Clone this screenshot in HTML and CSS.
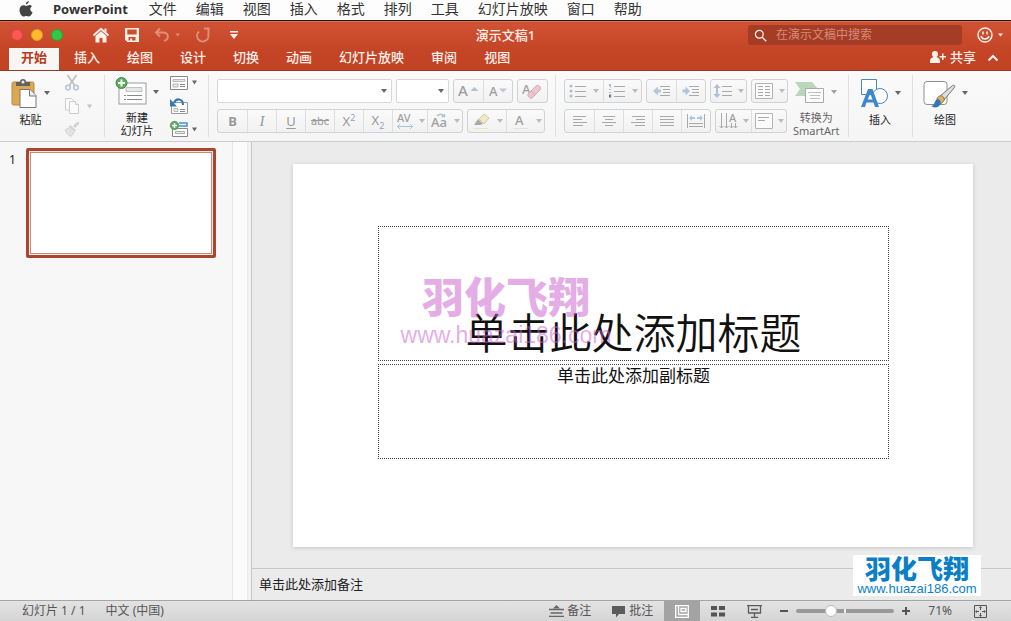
FILE: index.html
```html
<!DOCTYPE html>
<html lang="zh-CN">
<head>
<meta charset="utf-8">
<title>演示文稿1 - PowerPoint</title>
<link rel="stylesheet" href="styles.css">
</head>
<body>
<nav class="menubar" aria-label="应用菜单">
  <button class="menu" aria-label="Apple"><svg class="apple" width="16" height="16" viewBox="0 0 16 16"><path fill="currentColor" d="M10.8 0c.1 1.700-1.200 3.300-2.900 3.400C7.700 1.800 9.200.2 10.800 0zM13.900 5.400c-1.100.7-1.700 1.600-1.600 2.900.1 1.500.9 2.400 2.200 3-.6 1.700-1.900 4.200-3.500 4.300-.9 0-1.400-.6-2.600-.6s-1.700.6-2.600.6C3.600 15.600 1.500 11.800 1.500 8.900c0-3 1.900-4.700 3.900-4.700 1.200 0 2 .7 2.900.7.800 0 1.800-.8 3.200-.8 1 0 1.900.5 2.400 1.300z"/></svg></button>
  <button class="menu menu-app">PowerPoint</button>
  <button class="menu">文件</button>
  <button class="menu">编辑</button>
  <button class="menu">视图</button>
  <button class="menu">插入</button>
  <button class="menu">格式</button>
  <button class="menu">排列</button>
  <button class="menu">工具</button>
  <button class="menu">幻灯片放映</button>
  <button class="menu">窗口</button>
  <button class="menu">帮助</button>
</nav>

<header class="titlebar">
  <div class="title-row">
    <div class="title-left">
      <div class="lights">
        <button class="light light-close" aria-label="关闭"></button>
        <button class="light light-min" aria-label="最小化"></button>
        <button class="light light-max" aria-label="缩放"></button>
      </div>
      <div class="quick">
        <button aria-label="主页"><svg width="18" height="16" viewBox="0 0 18 16"><path fill="none" stroke="currentColor" stroke-width="2" d="M1.500 8.500 9 1.800l7.500 6.700"/><path fill="currentColor" d="M12.500 1.500h2v4l-2-1.800zM3.500 9 9 4.300 14.500 9v6.500h-4v-4.500h-3v4.500h-4z"/></svg></button>
        <button aria-label="保存"><svg width="14" height="14" viewBox="1 1 14 14"><path fill="currentColor" fill-rule="evenodd" d="M1 1h14v14H3.500L1 12.700zM3.300 2.500v5h9.400v-5zM4.500 10v3.500h1.700v-2h2v2h3.300V10z"/></svg></button>
        <button class="dim" aria-label="撤消"><svg width="26" height="16" viewBox="0 0 26 16"><path fill="none" stroke="currentColor" stroke-width="2" d="M6 1.500 2 5.500l4 4M2.500 5.500H9c6 0 6.500 7 1 8.500"/><path fill="currentColor" d="M21.500 6.500h4.500l-2.200 3z"/></svg></button>
        <button class="dim" aria-label="恢复"><svg width="16" height="16" viewBox="0 0 16 16"><path fill="none" stroke="currentColor" stroke-width="2" d="M9 1.500h5.500M13.500 1v6M4 4.500a5.700 5.700 0 1 0 9 2"/></svg></button>
        <button class="customize" aria-label="自定义工具栏"><svg width="8" height="10" viewBox="0 0 8 10"><path fill="currentColor" d="M0 1h8v1.500H0zM0 4h8L4 9z"/></svg></button>
      </div>
    </div>
    <h1 class="doc-title">演示文稿1</h1>
    <div class="title-right">
      <label class="search">
        <svg width="13" height="13" viewBox="0 0 13 13"><g fill="none" stroke="currentColor" stroke-width="1.300"><circle cx="5.300" cy="5.300" r="3.900"/><path d="m8.200 8.200 4 4"/></g></svg>
        <input type="search" placeholder="在演示文稿中搜索" aria-label="在演示文稿中搜索">
      </label>
      <button class="smile" aria-label="反馈"><svg width="26" height="16" viewBox="0 0 26 16"><circle cx="8" cy="8" r="7" fill="none" stroke="currentColor" stroke-width="1.400"/><path fill="none" stroke="currentColor" stroke-width="1.500" d="M6 4.500v3M10 4.500v3M4 9c1 4 7 4 8 0"/><path fill="currentColor" d="M21 6.500h5l-2.500 3z"/></svg></button>
    </div>
  </div>
  <div class="tab-row">
    <nav class="tabs" aria-label="功能区">
      <button class="tab tab-active">开始</button>
      <button class="tab">插入</button>
      <button class="tab">绘图</button>
      <button class="tab">设计</button>
      <button class="tab">切换</button>
      <button class="tab">动画</button>
      <button class="tab">幻灯片放映</button>
      <button class="tab">审阅</button>
      <button class="tab">视图</button>
    </nav>
    <button class="share"><svg width="18" height="14" viewBox="0 0 18 14"><path fill="currentColor" d="M6 1a3 3 0 0 1 3 3c0 1.500-.6 2.500-1.300 3.200 2 .6 3.300 1.800 3.300 3.800v2H1v-2c0-2 1.300-3.200 3.300-3.800C3.600 6.500 3 5.500 3 4a3 3 0 0 1 3-3zM13 3.500h1.500V6H17v1.500h-2.500V10H13V7.500h-2.500V6H13z"/></svg>共享</button>
    <button class="collapse" aria-label="折叠功能区"><svg width="12" height="8" viewBox="0 0 12 8"><path fill="none" stroke="currentColor" stroke-width="2" d="m1.500 6.500 4.500-4.500 4.500 4.500"/></svg></button>
  </div>
</header>

<section class="ribbon" aria-label="开始">
  <div class="group group-clip">
    <button class="big">
      <span class="big-icon"><svg width="27" height="30" viewBox="0 0 27 30"><rect x="1" y="4" width="22" height="23" rx="1.500" fill="#dba851" stroke="#b78a43"/><path fill="#66615c" d="M5 8V4h4a3 3 0 0 1 6 0h4v4z"/><circle cx="12" cy="4" r="1.500" fill="#eee"/><path fill="#fff" stroke="#777" d="M9 11.500h10l6 6v12H9z"/><path fill="#eee" stroke="#777" d="M18.500 11.500v6.500H25"/></svg><i class="caret"></i></span>
      <span>粘贴</span>
    </button>
    <div class="stack faded">
      <button aria-label="剪切"><svg width="28" height="16" viewBox="0 0 28 16"><path fill="none" stroke="#777" stroke-width="1.600" d="M3.500 0 11 11M12.500 0 5 11"/><g fill="none" stroke="#5d87b5" stroke-width="1.500"><circle cx="4" cy="12.500" r="2.300"/><circle cx="12" cy="12.500" r="2.300"/></g></svg></button>
      <button aria-label="复制"><svg width="28" height="16" viewBox="0 0 28 16"><g fill="#fff" stroke="#999"><path d="M1.500.5h6l3 3V12h-9z"/><path d="M5.500 3.500h6l3 3v9h-9z"/><path d="M11.500 3.500v3h3"/></g><path fill="#888" d="M23 6.500h5l-2.500 4z"/></svg></button>
      <button aria-label="格式刷"><svg width="28" height="16" viewBox="0 0 28 16"><path fill="#aaa" d="m9 5 4-4c1-1 3 1 2 2l-4 4zM6 4l6 5-1.500 2L4.500 6z"/><path fill="#c9cdd0" stroke="#999" stroke-width=".7" d="m4 7 6 5-3 3.500C4 14 2 12 1 9z"/></svg></button>
    </div>
  </div>

  <div class="group group-slides">
    <button class="big">
      <span class="big-icon"><svg width="32" height="30" viewBox="0 0 32 30"><rect x="4" y="6" width="27" height="21" fill="#fff" stroke="#999"/><path fill="#e5e8ea" stroke="#aaa" stroke-width=".7" d="M11 10.500h16v4H11z"/><path stroke="#888" d="M9 18.500h2m1 0h15M9 22.500h2m1 0h15"/><circle cx="6.500" cy="6" r="5.500" fill="#5bab5c" stroke="#418c43"/><path stroke="#fff" stroke-width="2" d="M6.500 2.500v7M3 6h7"/></svg><i class="caret"></i></span>
      <span>新建<br>幻灯片</span>
    </button>
    <div class="stack">
      <button aria-label="版式"><svg width="27" height="16" viewBox="0 0 27 16"><path fill="#fff" stroke="#888" d="M.5 1.500h17v13H.5z"/><path fill="#e9e9e9" stroke="#aaa" stroke-width=".8" d="M3 4.500h12v2H3zM3 9h5v3H3z"/><path stroke="#888" d="M10 9.500h5m-5 2h5"/><path fill="#666" d="M22 5.500h5l-2.500 4z"/></svg></button>
      <button aria-label="重置"><svg width="27" height="16" viewBox="0 0 27 16"><path fill="#fff" stroke="#999" d="M1.500 4.500h16v11h-16z"/><path fill="#e9e9e9" stroke="#aaa" stroke-width=".8" d="M4 10.500h4v3H4z"/><path stroke="#888" d="M10 11.500h5m-5 2h5"/><path fill="none" stroke="#3878b5" stroke-width="2.200" d="M4 5c2-5 9-5 9 2"/><path fill="#3878b5" d="M0 1v7.500h7z"/></svg></button>
      <button aria-label="节"><svg width="27" height="16" viewBox="0 0 27 16"><path fill="none" stroke="#4b8dce" stroke-width="1.500" d="M9 2h8v3H9"/><path fill="#fff" stroke="#888" d="M2.500 7.500h15v8h-15z"/><path fill="#eee" stroke="#aaa" d="M5.500 10.500h9v2h-9z"/><circle cx="4.500" cy="4.500" r="4.200" fill="#5bab5c" stroke="#418c43" stroke-width=".6"/><path stroke="#fff" stroke-width="1.600" d="M4.500 2v5M2 4.500h5"/><path fill="#666" d="M22 6.500h5l-2.500 4z"/></svg></button>
    </div>
  </div>

  <div class="group group-font">
    <div class="line">
      <label class="combo combo-font"><input type="text" aria-label="字体"><i class="caret"></i></label>
      <label class="combo combo-size"><input type="text" aria-label="字号"><i class="caret"></i></label>
      <div class="strip">
        <button class="cell" aria-label="增大字号"><svg width="22" height="18" viewBox="0 0 22 18"><text x="0" y="14" class="glyph glyph-l">A</text><path fill="#7da3c4" d="M12.500 9h8l-4-4z"/></svg></button>
        <button class="cell" aria-label="减小字号"><svg width="22" height="18" viewBox="0 0 22 18"><text x="2" y="14" class="glyph glyph-m">A</text><path fill="#9aabbb" d="M12 6.500h8l-4 4z"/></svg></button>
      </div>
      <div class="strip"><button class="cell" aria-label="清除格式"><svg width="24" height="20" viewBox="0 0 24 20"><text x="1" y="13" class="glyph glyph-m">A</text><path fill="#e9a9b4" stroke="#b77c88" d="m7 13 8-8c2-2 6 1 4 4l-8 8c-2 1-5-2-4-4z"/><path stroke="#b77c88" d="m10 10 4.500 4"/></svg></button></div>
    </div>
    <div class="line">
      <div class="strip">
        <button class="cell f-b">B</button>
        <button class="cell f-i">I</button>
        <button class="cell f-u">U</button>
        <button class="cell f-s">abc</button>
        <button class="cell f-x"><span>X<sup>2</sup></span></button>
        <button class="cell f-x"><span>X<sub>2</sub></span></button>
        <button class="cell cell-menu" aria-label="字符间距"><svg width="18" height="18" viewBox="0 0 18 18"><text x="1" y="10" class="glyph glyph-s">AV</text><path fill="none" stroke="#7da3c4" d="M1 14.500h16M4 12l-2.500 2.500L4 17m10-5 2.500 2.500L14 17"/></svg><i class="caret"></i></button>
        <button class="cell cell-menu" aria-label="更改大小写"><svg width="18" height="18" viewBox="0 0 18 18"><text x="0" y="15" class="glyph glyph-m">Aa</text><path fill="none" stroke="#7da3c4" stroke-width="1.500" d="M6 4c3-3 6-2 7 1m-2.500-.5h3V2"/></svg><i class="caret"></i></button>
      </div>
      <div class="strip">
        <button class="cell cell-split" aria-label="突出显示"><svg width="20" height="18" viewBox="0 0 20 18"><path fill="#eee0a4" stroke="#c0ac6b" d="m8 7 5-5 5 4-5 6z"/><path fill="#777" d="m7 7 5 5-3 1H3z"/><path stroke="#e6dc9c" d="M2 16.500h15"/></svg><i class="caret"></i></button>
        <button class="cell cell-split" aria-label="字体颜色"><svg width="20" height="18" viewBox="0 0 20 18"><text x="5" y="13" class="glyph glyph-m">A</text><path stroke="#e4d2d2" d="M3 16.500h15"/></svg><i class="caret"></i></button>
      </div>
    </div>
  </div>

  <div class="group group-para">
    <div class="para">
      <div class="line">
        <div class="strip">
          <button class="cell cell-split" aria-label="项目符号"><svg width="18" height="16" viewBox="0 0 18 16"><g fill="#7d96b4"><circle cx="2" cy="3" r="1.500"/><circle cx="2" cy="8" r="1.500"/><circle cx="2" cy="13" r="1.500"/></g><path stroke="#777" d="M6 3.500h11M6 8.500h11M6 13.500h11"/></svg><i class="caret"></i></button>
          <button class="cell cell-split" aria-label="编号"><svg width="18" height="16" viewBox="0 0 18 16"><path stroke="#7d96b4" d="M1 1.500h1.500v3m-1.500 2h2m-2 3h2m-2 2h2v3H1"/><path stroke="#777" d="M6 3.500h11M6 8.500h11M6 13.500h11"/></svg><i class="caret"></i></button>
        </div>
        <div class="strip">
          <button class="cell" aria-label="减少缩进"><svg width="20" height="14" viewBox="0 0 20 14"><path fill="#87a8cf" d="m1 7 5-4.500v3h3v3H6v3z"/><path stroke="#777" d="M8 2.500h10m-7 3h7m-7 3h7m-10 3h10"/></svg></button>
          <button class="cell" aria-label="增加缩进"><svg width="20" height="14" viewBox="0 0 20 14"><path fill="#78a7cf" d="M9 7 4.500 2.500v3h-3v3h3v3z"/><path stroke="#777" d="M8 2.500h10m-7 3h7m-7 3h7m-10 3h10"/></svg></button>
        </div>
        <div class="strip"><button class="cell cell-menu" aria-label="行距"><svg width="20" height="16" viewBox="0 0 20 16"><path fill="#839bc4" d="m4 1 3.500 4H5v6h2.500L4 15 .5 11H3V5H.5z"/><path stroke="#777" d="M9 3.500h10M9 8.500h10M9 12.500h10"/></svg><i class="caret"></i></button></div>
        <div class="strip"><button class="cell cell-menu" aria-label="分栏"><svg width="20" height="16" viewBox="0 0 20 16"><path fill="#fff" stroke="#888" d="M1.500.5h17v15h-17z"/><path stroke="#777" d="M4 3.500h5m2 0h5m-12 3h5m2 0h5m-12 3h5m2 0h5m-12 3h5m2 0h5"/></svg><i class="caret"></i></button></div>
      </div>
      <div class="line">
        <div class="strip">
          <button class="cell" aria-label="左对齐"><svg width="16" height="14" viewBox="0 0 16 14"><path stroke="#777" d="M1 2.500h13m-13 3h9m-9 3h14m-14 3h10"/></svg></button>
          <button class="cell" aria-label="居中"><svg width="16" height="14" viewBox="0 0 16 14"><path stroke="#777" d="M2 2.500h12m-10 3h8m-11 3h14m-11 3h8"/></svg></button>
          <button class="cell" aria-label="右对齐"><svg width="16" height="14" viewBox="0 0 16 14"><path stroke="#777" d="M2 2.500h13m-9 3h9m-14 3h14m-10 3h10"/></svg></button>
          <button class="cell" aria-label="两端对齐"><svg width="16" height="14" viewBox="0 0 16 14"><path stroke="#777" d="M1 2.500h14m-14 3h14m-14 3h14m-14 3h14"/></svg></button>
          <button class="cell" aria-label="分散对齐"><svg width="20" height="16" viewBox="0 0 20 16"><path stroke="#777" d="M1.500 1v14m17-14v14M3 10.500h14m-14 3h14"/><path fill="#76a9c7" d="m3 5 3-3v2h3v2H6v2zm14 0-3-3v2h-3v2h3v2z"/></svg></button>
        </div>
        <div class="strip">
          <button class="cell cell-menu" aria-label="文字方向"><svg width="20" height="18" viewBox="0 0 20 18"><path fill="none" stroke="#777" d="M3.500 1v15M8.500 1v15M13.500 11v5m4-5v5M1.500 14l2 2 2-2m1 0 2 2 2-2m1 0 2 2 2-2m0 0 2 2 2-2"/><text x="11" y="10" class="glyph glyph-s">A</text></svg><i class="caret"></i></button>
          <button class="cell cell-menu" aria-label="对齐文本"><svg width="18" height="16" viewBox="0 0 18 16"><path fill="#fff" stroke="#888" d="M.5.5h17v15H.5z"/><path stroke="#777" d="M3 4.500h11M3 7.500h7"/></svg><i class="caret"></i></button>
        </div>
      </div>
    </div>
    <button class="big big-off">
      <span class="big-icon"><svg width="30" height="30" viewBox="0 0 30 30"><path fill="#8fc292" d="M0 5h17l6 7-6 7H0l5-7z"/><path fill="#fff" stroke="#777" d="M10.500 11.500h18v14h-18z"/><path stroke="#999" d="M13 15.500h13M15 18.500h10M15 21.500h10"/></svg><i class="caret"></i></span>
      <span>转换为<br>SmartArt</span>
    </button>
  </div>

  <div class="group group-insert">
    <button class="big">
      <span class="big-icon"><svg width="29" height="30" viewBox="0 0 29 30"><path fill="#fff" stroke="#4b89bd" d="M1.500 1.500h15v15h-15z"/><circle cx="20" cy="18" r="7.500" fill="#fff" stroke="#4b89bd"/><path fill="#3d87cc" fill-rule="evenodd" d="M8 11h4.500L19 29h-4l-1.500-4.500h-7L5 29H1zm2.200 4.500L7.700 21.500h4.900z"/></svg><i class="caret"></i></span>
      <span>插入</span>
    </button>
  </div>
  <div class="group group-draw">
    <button class="big">
      <span class="big-icon"><svg width="33" height="30" viewBox="0 0 33 30"><rect x="1" y="3.500" width="23" height="23" rx="3" fill="#fff" stroke="#8f8f8f"/><path fill="#ddd" stroke="#777" d="m17 18 12-10c2-2 4 0 2 2L21 22z"/><path fill="#deb16b" stroke="#9a7546" d="M14 21c1-4 6-4 7-1s-2 6-5 6z"/><path fill="#3475b5" d="M8 28c4 0 3-5 6-7 3 0 5 3 3 6-2 3-6 3-9 1z"/></svg><i class="caret"></i></span>
      <span>绘图</span>
    </button>
  </div>
</section>

<main class="workspace">
  <aside class="thumbs" aria-label="幻灯片缩略图">
    <span class="thumb-no">1</span>
    <button class="thumb" aria-label="幻灯片 1"></button>
  </aside>
  <div class="scroller"></div>
  <section class="editor">
    <div class="stage">
      <article class="slide">
        <h2 class="holder holder-title">单击此处添加标题</h2>
        <p class="holder holder-sub">单击此处添加副标题</p>
        <div class="mark mark-slide"><strong>羽化飞翔</strong><span>www.huazai186.com</span></div>
      </article>
    </div>
    <input class="notes" type="text" placeholder="单击此处添加备注" aria-label="备注">
    <div class="mark mark-corner"><strong>羽化飞翔</strong><span>www.huazai186.com</span></div>
  </section>
</main>

<footer class="status">
  <span>幻灯片 1 / 1</span>
  <button class="lang">中文 (中国)</button>
  <div class="status-right">
    <button class="status-btn"><svg width="15" height="12" viewBox="0 0 15 12"><path fill="#666" d="m7.500 0 3.500 3.500H4z"/><path stroke="#666" stroke-width="1.300" d="M0 4.500h15M1.500 8h12M0 11.300h15"/></svg>备注</button>
    <button class="status-btn"><svg width="15" height="13" viewBox="0 0 15 13"><path fill="#5c5c5c" d="M1 1h13v8H8l-3 3.500V9H1z"/></svg>批注</button>
    <div class="views">
      <button class="view view-on" aria-label="普通视图"><svg width="14" height="13" viewBox="0 0 14 13"><path fill="none" stroke="#fff" stroke-width="1.300" d="M.7.7h12.600v11.600H.7zM3.500 1v8.500M3.500 9.500H13M6 3.500h5v3H6z"/></svg></button>
      <button class="view" aria-label="幻灯片浏览"><svg width="16" height="12" viewBox="0 0 16 12"><path fill="#555" d="M1 1h6v4H1zM9 1h6v4H9zM1 7.500h6v4H1zM9 7.500h6v4H9z"/></svg></button>
      <button class="view" aria-label="幻灯片放映"><svg width="15" height="13" viewBox="0 0 15 13"><path fill="none" stroke="#5c5c5c" stroke-width="1.300" d="M0 .7h15M1.500 1v7h12V1M4 4.500h7M7.500 8v4M4 12.300h7"/></svg></button>
    </div>
    <div class="zoom">
      <button aria-label="缩小"><svg width="8" height="8" viewBox="0 0 8 8"><path stroke="#555" stroke-width="2" d="M0 4h8"/></svg></button>
      <input type="range" min="0" max="100" value="33" aria-label="缩放比例">
      <button aria-label="放大"><svg width="8" height="8" viewBox="0 0 8 8"><path stroke="#555" stroke-width="2" d="M0 4h8M4 0v8"/></svg></button>
    </div>
    <span class="percent">71%</span>
    <button aria-label="适应窗口"><svg width="13" height="13" viewBox="0 0 13 13"><path fill="none" stroke="#555" d="M.5.500h12v12H.5zM6.500 2v3m0 3v3M2 6.500h3m3 0h3"/><path fill="#555" d="m6.500 1 1.500 2H5zm0 11L5 10h3zM1 6.500 3 5v3zm11 0L10 8V5z"/></svg></button>
  </div>
</footer>
</body>
</html>
```

FILE: styles.css
```css
* { box-sizing: border-box; }

body {
  margin: 0;
  height: 100vh;
  display: flex;
  flex-direction: column;
  overflow: hidden;
  background: #ebebeb;
  color: #222;
  font: 12px/16px "Noto Sans", "Noto Sans CJK SC", sans-serif;
}

button {
  border: 0;
  padding: 0;
  background: none;
  color: inherit;
  font: inherit;
  white-space: nowrap;
}

input { font: inherit; min-width: 0; }
svg { display: block; flex: none; overflow: visible; }

.caret {
  flex: none;
  border: 3px solid transparent;
  border-top: 4px solid #666;
  border-bottom: 0;
}

/* System menu bar */
.menubar {
  flex: none;
  display: flex;
  align-items: center;
  gap: 19px;
  height: 21px;
  padding: 0 18px 2px;
  background: #fdfdfd;
  border-bottom: 1px solid #231815;
}

.menu { color: #333; font-size: 14px; line-height: 18px; }
.menu-app { padding-right: 2px; font-size: 13px; font-weight: 700; }
.apple { color: #444; }

/* Window title and tabs */
.titlebar {
  flex: none;
  height: 50px;
  background: linear-gradient(#d15234, #c44526 60%, #c14224);
  border-top: 1px solid #dc6e50;
  border-bottom: 1px solid #963a26;
  color: #fff0ea;
}

.title-row {
  display: grid;
  grid-template-columns: 1fr auto 1fr;
  align-items: center;
  height: 26px;
}

.title-left { display: flex; align-items: center; gap: 29px; padding-left: 11px; }
.lights { display: flex; gap: 8px; }
.light { width: 12px; height: 12px; border-radius: 50%; }
.light-close { background: #fc5753; border: 1px solid #df4040; }
.light-min { background: #fdbc2e; border: 1px solid #df9d20; }
.light-max { background: #33c748; border: 1px solid #24a536; }
.quick { display: flex; align-items: center; gap: 15px; }
.dim { opacity: 0.4; }
.customize { padding-left: 4px; }
.doc-title { margin: 0; font-size: 13px; line-height: 16px; font-weight: 500; }

.title-right { display: flex; align-items: center; justify-content: flex-end; gap: 15px; padding-right: 8px; }
.search {
  display: flex;
  align-items: center;
  gap: 9px;
  width: 214px;
  height: 20px;
  padding: 0 6px;
  border-radius: 3px;
  background: #a53c26;
}
.search input {
  flex: 1;
  padding: 0;
  border: 0;
  outline: 0;
  background: none;
  color: inherit;
  appearance: none;
}
.search input::placeholder { color: #d58c7a; opacity: 1; }

.tab-row { display: flex; align-items: flex-end; padding: 0 12px 0 9px; height: 22px; }
.tabs { display: flex; gap: 3px; flex: 1; }
.tab {
  height: 22px;
  padding: 0 12px 4px;
  font-size: 13px;
  line-height: 18px;
  font-weight: 500;
}
.tab-active { background: #f8f7f6; color: #b83b1d; font-weight: 700; }
.share {
  display: flex;
  align-items: center;
  gap: 3px;
  margin-right: 11px;
  padding-bottom: 5px;
  font-size: 13px;
  font-weight: 500;
}
.collapse { padding-bottom: 8px; }

/* Ribbon */
.ribbon {
  flex: none;
  display: flex;
  height: 71px;
  padding: 4px 0;
  background: linear-gradient(#fafafa, #f5f5f5);
  border-bottom: 1px solid #ccc;
}

.group { display: flex; border-right: 1px solid #e0e0e0; }
.group-clip { padding-left: 11px; gap: 14px; width: 105px; }
.group-slides { padding-left: 10px; gap: 11px; width: 104px; }
.group-font { flex-direction: column; justify-content: center; gap: 6px; padding: 0 7px 0 8px; }
.group-para { padding: 0 8px; gap: 5px; }
.group-insert { padding: 0 11px; }
.group-draw { padding: 0 10px; border: 0; }

.big {
  display: flex;
  flex-direction: column;
  align-items: center;
  justify-content: flex-start;
  font-size: 11px;
  line-height: 13px;
}
.big-icon { display: flex; align-items: center; gap: 6px; height: 36px; margin-bottom: 2px; }
.big-off { color: #666; }
.big-off .big-icon { opacity: 0.6; }

.stack { display: flex; flex-direction: column; gap: 7px; }
.faded { opacity: 0.45; }

.para { display: flex; flex-direction: column; justify-content: center; gap: 6px; }
.line { display: flex; gap: 4px; }

.combo {
  display: flex;
  align-items: center;
  height: 24px;
  padding-right: 4px;
  border: 1px solid #d5d8d8;
  border-radius: 2px;
  background: #fff;
}
.combo input { flex: 1; width: 0; border: 0; outline: 0; background: none; }
.combo-font { width: 175px; }
.combo-size { width: 53px; }

.strip {
  display: flex;
  height: 24px;
  border: 1px solid #d0d3d3;
  border-radius: 3px;
  background: linear-gradient(#fafafa, #f1f1f1);
}
.cell {
  display: flex;
  align-items: center;
  justify-content: center;
  width: 29px;
  color: #999;
  font-size: 13px;
}
.cell + .cell { border-left: 1px solid #dcdfdf; }
.cell svg { opacity: 0.6; }
.cell .caret { opacity: 0.4; }
.cell-menu { width: 35px; gap: 5px; }
.cell-split { width: 38px; gap: 6px; }
.f-b { font-weight: 700; }
.f-i { font-family: "Liberation Serif", serif; font-style: italic; font-size: 15px; }
.f-u { text-decoration: underline; text-underline-offset: 2px; }
.f-s { font-size: 11px; text-decoration: line-through; }
.f-x sup, .f-x sub { font-size: 9px; line-height: 9px; color: #8ca5bd; }
.glyph { fill: #666; font-family: "Noto Sans", sans-serif; font-weight: 500; }
.glyph-l { font-size: 15px; }
.glyph-m { font-size: 13px; }
.glyph-s { font-size: 11px; }

/* Workspace */
.workspace { flex: 1; display: flex; min-height: 0; }
.thumbs {
  flex: none;
  display: flex;
  align-items: flex-start;
  gap: 10px;
  width: 232px;
  padding: 6px 16px 0 9px;
  background: #f7f7f7;
}
.thumb-no { padding-top: 4px; }
.thumb {
  flex: 1;
  height: 110px;
  border: 3px solid #a9462f;
  border-radius: 2px;
  background: #fff;
  box-shadow: inset 0 0 0 1px #f6e9e6, inset 0 0 0 2px #c98a7c;
}
.scroller {
  flex: none;
  width: 20px;
  border-left: 1px solid #e6e6e6;
  border-right: 1px solid #c8c8c8;
  background: linear-gradient(90deg, #fbfbfb 14px, #e4e4e4 14px, #f2f2f2 15px);
}
.editor { position: relative; flex: 1; display: flex; flex-direction: column; min-width: 0; }
.stage { flex: 1; display: flex; padding: 22px 38px 21px 41px; }
.slide {
  position: relative;
  flex: 1;
  display: grid;
  grid-template-columns: 511fr;
  grid-template-rows: 135fr 95fr;
  row-gap: 3px;
  padding: 62px 84px 88px 85px;
  background: #fff;
  box-shadow: 0 1px 4px #c4c4c4;
}
.holder {
  margin: 0;
  border: 1px dotted #444;
  color: #111;
  text-align: center;
}
.holder-title {
  display: flex;
  align-items: flex-end;
  justify-content: center;
  font-family: "Noto Sans CJK SC", sans-serif;
  font-size: 42px;
  line-height: 58px;
  font-weight: 350;
}
.holder-sub { font-size: 17px; line-height: 22px; }

.notes {
  flex: none;
  height: 32px;
  padding: 0 7px;
  border: 0;
  border-top: 1px solid #c6c6c6;
  outline: 0;
  background: #ebebeb;
  font-family: "Liberation Serif", "Noto Sans CJK SC", serif;
  font-size: 13px;
}
.notes::placeholder { color: #222; opacity: 1; }

.mark {
  position: absolute;
  display: flex;
  flex-direction: column;
  align-items: center;
  font-family: "Liberation Sans", "Noto Sans CJK SC", sans-serif;
  white-space: nowrap;
}
.mark strong { font-weight: 900; }
.mark-slide { left: 107px; top: 112px; width: 212px; color: rgba(201, 92, 205, 0.5); }
.mark-slide strong { font-size: 42px; line-height: 46px; }
.mark-slide span { font-size: 23px; line-height: 26px; }
.mark-corner { right: 30px; bottom: 4px; width: 128px; height: 41px; padding-top: 2px; background: #fff; color: #0a7fc8; }
.mark-corner strong { font-size: 26px; line-height: 26px; }
.mark-corner span { font-size: 13px; line-height: 12px; }

/* Status bar */
.status {
  flex: none;
  display: flex;
  align-items: center;
  gap: 20px;
  height: 21px;
  padding: 0 24px 0 22px;
  border-top: 1px solid #a5a5a5;
  background: linear-gradient(#e3e3e3, #d5d5d5);
  color: #555;
}
.status-right { display: flex; align-items: center; margin-left: auto; }
.status-btn { display: flex; align-items: center; gap: 3px; margin-right: 20px; }
.status-btn + .status-btn { margin-right: 11px; }
.views { display: flex; }
.view { display: flex; align-items: center; justify-content: center; width: 36px; height: 20px; }
.view-on { background: #a3a3a3; }
.zoom { display: flex; align-items: center; gap: 8px; margin-left: 8px; }
.zoom input {
  appearance: none;
  width: 98px;
  height: 12px;
  margin: 0;
  background: none;
}
.zoom input::-webkit-slider-runnable-track {
  height: 4px;
  border-radius: 2px;
  background: linear-gradient(90deg, #999 48px, #eee 48px, #eee 50px, #999 50px);
}
.zoom input::-webkit-slider-thumb {
  appearance: none;
  width: 12px;
  height: 12px;
  margin-top: -4px;
  border: 1px solid #bbb;
  border-radius: 50%;
  background: #fff;
}
.percent { margin: 0 22px 0 18px; }
```
